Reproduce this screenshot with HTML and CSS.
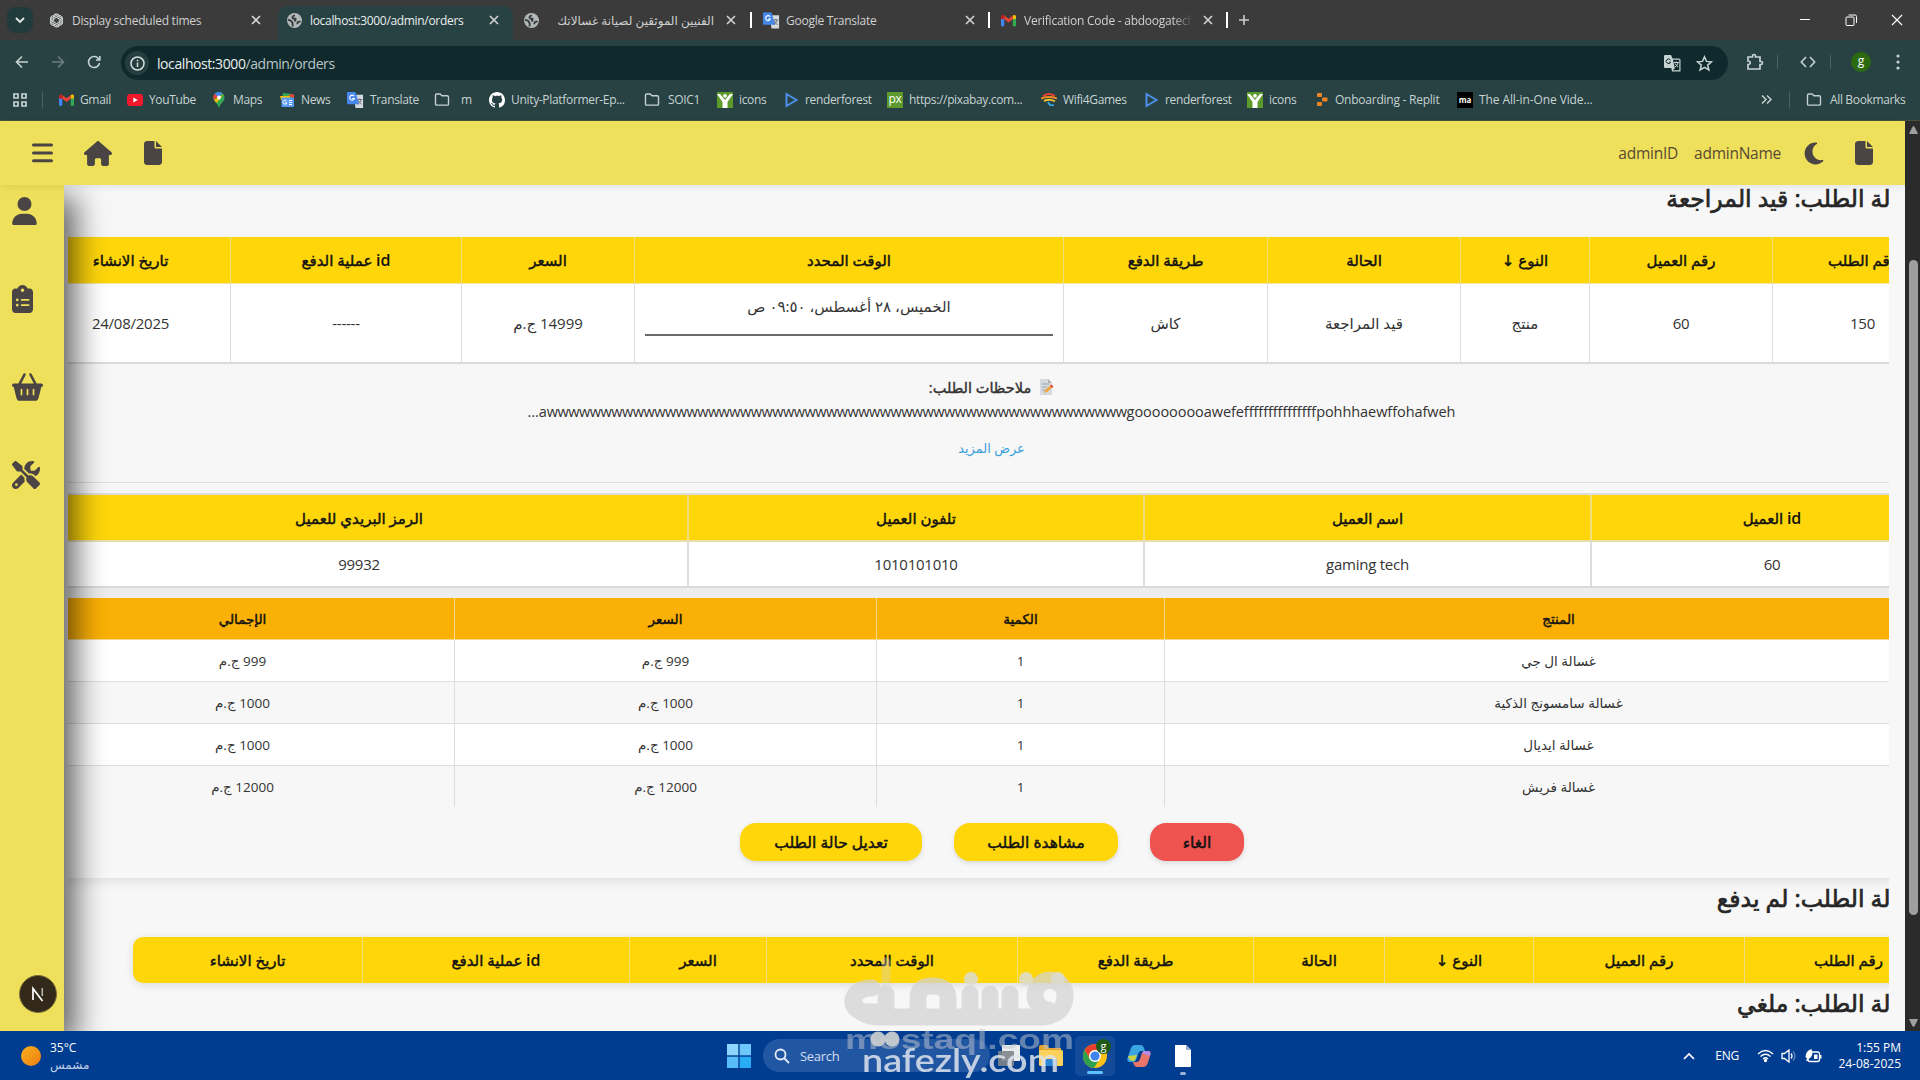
FILE: index.html
```html
<!DOCTYPE html>
<html lang="ar">
<head>
<meta charset="utf-8">
<title>localhost:3000/admin/orders</title>
<link rel="stylesheet" href="styles.css">
</head>
<body>
<svg class="defs" aria-hidden="true">
  <symbol id="x" viewBox="0 0 10 10"><path d="M1 1l8 8M9 1L1 9" stroke="currentColor" stroke-width="1.600" fill="none"/></symbol>
  <symbol id="globe" viewBox="0 0 16 16"><circle cx="8" cy="8" r="8" fill="#b5b8b9"/><path d="M8.500 2.500C6 3 5 4.500 6.500 6H9v2H7.500M1 7l3.500 1.500L6 11v3.500M14.500 9.500C12 8.500 11 10 11 12" stroke="#333d3e" stroke-width="2" fill="none"/></symbol>
  <symbol id="gtrans" viewBox="0 0 18 18"><path d="M7 4h10v14H9z" fill="#d5dadd"/><path d="M0 1h9l4 13H1a1 1 0 0 1-1-1z" fill="#4687ec"/><path d="M7.600 5.600A2.600 2.600 0 1 0 7.800 8H5.400" stroke="#fff" stroke-width="1.200" fill="none"/><path d="M11 9h5M13.500 8v1M15 9c-.5 2.500-2 4-3.500 5M12 10c.5 1.500 2 3 3.500 4" stroke="#667" fill="none"/></symbol>
  <symbol id="gmail" viewBox="0 0 16 12"><path d="M0 12V2l3.500 2.600V12z" fill="#4285f4"/><path d="M12.500 12V4.600L16 2v10z" fill="#34a853"/><path d="M12.500 4.600V.7c1.500-1.200 3.500-.6 3.500 1.300v2z" fill="#fbbc04"/><path d="M3.500.7 8 4.200 12.500.7v4L8 8.200l-4.500-3.500z" fill="#ea4335"/><path d="M0 2C0 .1 2-.5 3.500.7v4L0 4.500z" fill="#c5221f"/></symbol>
  <symbol id="folder" viewBox="0 0 16 14"><path d="M1 12V2.500Q1 1 2.500 1H6l2 2h5.500Q15 3 15 4.500V12q0 1-1 1H2q-1 0-1-1z" fill="none" stroke="#c3d1d1" stroke-width="1.500"/></symbol>
  <symbol id="ico-y" viewBox="0 0 16 16"><path d="M0 0h16v16H0z" fill="#5c9a2b"/><path d="M0 2l5.500 8v6h5v-6L16 2h-3l-5 6-5-6z" fill="#fff"/><circle cx="8" cy="3.800" r="1.900" fill="#fff"/></symbol>
  <symbol id="rf" viewBox="0 0 13 16"><path d="M1.500 2v12L11.500 8z" fill="none" stroke="#4a8fe6" stroke-width="2"/></symbol>
  <symbol id="file" viewBox="0 0 384 512"><path d="M0 64C0 28.700 28.700 0 64 0L224 0l0 128c0 17.700 14.300 32 32 32l128 0 0 288c0 35.300-28.700 64-64 64L64 512c-35.300 0-64-28.700-64-64L0 64zm384 64l-128 0L256 0 384 128z"/></symbol>
</svg>

<div class="tabs">
  <span class="tabmenu"><svg width="10" height="7" viewBox="0 0 10 7"><path d="M1 1l4 4 4-4" fill="none" stroke="#e6eded" stroke-width="1.800"/></svg></span>
  <div class="tab"><svg class="fav" viewBox="0 0 16 16" fill="none" stroke="#d0d3d4" stroke-width="1.200"><g id="k"><path d="M4.800 3.900a3.200 3.200 0 0 1 6.200-.6M5 8.900V4.300L9 2"/></g><use href="#k" transform="rotate(60 8 8)"/><use href="#k" transform="rotate(120 8 8)"/><use href="#k" transform="rotate(180 8 8)"/><use href="#k" transform="rotate(240 8 8)"/><use href="#k" transform="rotate(300 8 8)"/></svg><span class="tt">Display scheduled times</span><svg class="cl"><use href="#x"/></svg></div>
  <div class="tab on"><svg class="fav"><use href="#globe"/></svg><span class="tt">localhost:3000/admin/orders</span><svg class="cl"><use href="#x"/></svg></div>
  <div class="tab"><svg class="fav"><use href="#globe"/></svg><span class="tt ar" dir="rtl">الفنيين الموثقين لصيانة غسالاتك</span><svg class="cl"><use href="#x"/></svg></div>
  <div class="tab sep"><svg class="fav big"><use href="#gtrans"/></svg><span class="tt">Google Translate</span><svg class="cl"><use href="#x"/></svg></div>
  <div class="tab sep"><svg class="fav"><use href="#gmail"/></svg><span class="tt fade">Verification Code - abdoogatech</span><svg class="cl"><use href="#x"/></svg></div>
  <div class="newtab"><svg width="12" height="12" viewBox="0 0 12 12"><path d="M6 1v10M1 6h10" stroke="#ccc" stroke-width="1.600"/></svg></div>
  <div class="win">
    <svg width="12" height="12" viewBox="0 0 12 12"><path d="M1 5.500h10" stroke="#fff"/></svg>
    <svg width="12" height="12" viewBox="0 0 12 12" fill="none" stroke="#fff"><rect x="1" y="3" width="8" height="8.500" rx="1"/><path d="M3.500 1H10q1.500 0 1.500 1.500V9"/></svg>
    <svg width="12" height="12" viewBox="0 0 12 12"><path d="M1 1l10 10M11 1L1 11" stroke="#fff" stroke-width="1.200"/></svg>
  </div>
</div>

<div class="toolbar">
  <svg width="14" height="14" viewBox="0 0 14 14" fill="none" stroke="#c6d3d3" stroke-width="1.600"><path d="M13 7H2M7 1.500L1.500 7 7 12.500"/></svg>
  <svg width="14" height="14" viewBox="0 0 14 14" fill="none" stroke="#6b8080" stroke-width="1.600"><path d="M1 7h11M7 1.500L12.500 7 7 12.500"/></svg>
  <svg width="14" height="14" viewBox="0 0 14 14" fill="none" stroke="#c6d3d3" stroke-width="1.600"><path d="M12 4.500A5.500 5.500 0 1 0 12.500 8M12.800 1v4H9"/></svg>
  <div class="omni">
    <span class="info"><svg width="15" height="15" viewBox="0 0 15 15"><circle cx="7.500" cy="7.500" r="6.500" fill="none" stroke="#d5dfdf" stroke-width="1.500"/><path d="M7.500 6.500v4.500M7.500 3.800v1.500" stroke="#d5dfdf" stroke-width="1.500"/></svg></span>
    <span class="url">localhost:3000<b>/admin/orders</b></span>
    <svg width="17" height="17" viewBox="0 0 17 17"><path d="M1 0h6l1.500 3.500H15q1.500 0 1.500 1.500v11.500H8L7.300 13H1q-1 0-1-1V1q0-1 1-1z" fill="#c6d3d3"/><path d="M9 4.700h6.300v10.500H8.800l2-2z" fill="#10292c"/><path d="M6.500 5A2.300 2.300 0 1 0 6.700 7.200H5" stroke="#10292c" fill="none"/><path d="M9.800 7.500H15M12.300 6.500v1M14 7.500c-.5 2-1.500 3.500-3 4.500M11 8.500l3 3.500" stroke="#c6d3d3" fill="none"/></svg>
    <svg width="17" height="17" viewBox="0 0 17 17"><path d="M8.500 1.800l2 4.600 5 .4-3.800 3.300 1.200 4.900-4.400-2.700L4.100 15l1.200-4.900L1.500 6.800l5-.4z" fill="none" stroke="#c6d3d3" stroke-width="1.500"/></svg>
  </div>
  <svg class="ext" width="18" height="18" viewBox="0 0 18 18"><path d="M2 4h4.500V3a1.500 1.500 0 0 1 3 0v1H14v4.500h1a1.500 1.500 0 0 1 0 3h-1V16H2v-4.500h.5a1.500 1.500 0 0 0 0-3.500H2z" fill="none" stroke="#c6d3d3" stroke-width="1.700"/></svg>
  <i class="bar"></i>
  <svg class="code" width="16" height="12" viewBox="0 0 16 12" fill="none" stroke="#c6d3d3" stroke-width="1.600"><path d="M6 1L1.300 6 6 11M10 1l4.700 5L10 11"/></svg>
  <i class="bar"></i>
  <span class="avatar">g</span>
  <svg width="4" height="16" viewBox="0 0 4 16" fill="#c6d3d3"><circle cx="2" cy="2" r="1.600"/><circle cx="2" cy="8" r="1.600"/><circle cx="2" cy="14" r="1.600"/></svg>
</div>

<div class="marks">
  <div class="bm w1"><svg width="14" height="14" viewBox="0 0 14 14" fill="none" stroke="#c6d3d3" stroke-width="1.700"><path d="M1 1h4v4H1zM9 1h4v4H9zM1 9h4v4H1zM9 9h4v4H9z"/></svg></div>
  <div class="bm w2"><svg width="15" height="12"><use href="#gmail"/></svg>Gmail</div>
  <div class="bm w3"><svg width="16" height="12" viewBox="0 0 16 12"><rect width="16" height="12" rx="3" fill="#f0182c"/><path d="M6.300 3.500v5L10.800 6z" fill="#fff"/></svg>YouTube</div>
  <div class="bm w4"><svg width="12" height="16" viewBox="0 0 12 16"><path d="M6 0a5.500 5.500 0 0 1 5.500 5.700C11.500 9.500 7.500 11 6 16 4.500 11 .5 9.500.5 5.700A5.500 5.500 0 0 1 6 0z" fill="#34a853"/><path d="M6 0a5.500 5.500 0 0 0-4.500 2L5 5.500 9.500 1.300A6 6 0 0 0 6 0z" fill="#4285f4"/><path d="M1.500 2A5.500 5.500 0 0 0 1 8l4-3.500z" fill="#ea4335"/><path d="M1 8l2.500 3 7-8.500z" fill="#fbbc04"/><circle cx="6" cy="5.500" r="1.900" fill="#fff"/></svg>Maps</div>
  <div class="bm w5"><svg width="15" height="14" viewBox="0 0 15 14"><path d="M3 0l9 1v5H2z" fill="#34a853"/><path d="M8 2l6-1v5z" fill="#ea4335"/><path d="M0 3h10v4H1z" fill="#fbbc04"/><rect x="1.500" y="4.500" width="12.500" height="9.500" rx="1" fill="#5a9bf3"/><path d="M6.500 8A2 2 0 1 0 6.800 9.800H5M9 7.500h3M9 9.500h3M9 11.500h3" stroke="#fff" fill="none"/></svg>News</div>
  <div class="bm w6"><svg width="17" height="17"><use href="#gtrans"/></svg>Translate</div>
  <div class="bm w7"><svg width="16" height="13"><use href="#folder"/></svg>m</div>
  <div class="bm w8"><svg width="16" height="16" viewBox="0 0 16 16"><path fill="#fff" d="M8 0C3.580 0 0 3.580 0 8c0 3.540 2.290 6.530 5.470 7.590.4.070.55-.17.55-.38 0-.19-.01-.82-.01-1.490-2.010.37-2.530-.49-2.690-.94-.09-.23-.48-.94-.82-1.130-.28-.15-.68-.52-.01-.53.63-.01 1.080.58 1.230.82.720 1.210 1.870.87 2.330.66.070-.52.280-.87.510-1.070-1.780-.2-3.640-.89-3.640-3.950 0-.87.310-1.590.82-2.150-.08-.2-.36-1.020.08-2.120 0 0 .67-.21 2.200.82.640-.18 1.320-.27 2-.27s1.360.09 2 .27c1.530-1.040 2.200-.82 2.200-.82.440 1.100.160 1.920.080 2.120.510.56.820 1.270.820 2.150 0 3.070-1.870 3.750-3.650 3.950.290.250.540.730.540 1.480 0 1.070-.01 1.930-.01 2.200 0 .210.150.460.550.380A8 8 0 0 0 16 8c0-4.420-3.580-8-8-8z"/></svg>Unity-Platformer-Ep...</div>
  <div class="bm w9"><svg width="16" height="13"><use href="#folder"/></svg>SOIC1</div>
  <div class="bm w10"><svg width="16" height="16"><use href="#ico-y"/></svg>icons</div>
  <div class="bm w11"><svg width="13" height="16"><use href="#rf"/></svg>renderforest</div>
  <div class="bm w12"><span class="px">px</span>https://pixabay.com...</div>
  <div class="bm w13"><svg width="16" height="13" viewBox="0 0 16 13" fill="none" stroke-width="2"><path d="M2 3Q8-1 14 3" stroke="#e5402f"/><path d="M0 5.500q8-3 16 0" stroke="#f08a24"/><path d="M3 8q6-2.500 11 .5" stroke="#e8c12f"/><path d="M7 9l2 3 4 .5" stroke="#35a3dc"/></svg>Wifi4Games</div>
  <div class="bm w14"><svg width="13" height="16"><use href="#rf"/></svg>renderforest</div>
  <div class="bm w15"><svg width="16" height="16"><use href="#ico-y"/></svg>icons</div>
  <div class="bm w16"><svg width="12" height="13" viewBox="0 0 12 13" fill="#f08423"><rect x="1" width="5" height="4" rx="1"/><rect x="6" y="4.500" width="5.500" height="4" rx="1"/><rect x="1" y="9" width="5" height="4" rx="1"/></svg>Onboarding - Replit</div>
  <div class="bm w17"><span class="ma">ma</span>The All-in-One Vide...</div>
  <div class="bm w18"><svg width="11" height="9" viewBox="0 0 11 9" fill="none" stroke="#c6d3d3" stroke-width="1.500"><path d="M1 .5l4 4-4 4M6 .5l4 4-4 4"/></svg></div>
  <div class="bm w19"><svg width="16" height="13"><use href="#folder"/></svg>All Bookmarks</div>
</div>

<div class="page">
  <div class="view">
    <header class="top">
      <svg width="21" height="20" viewBox="0 0 21 20"><path d="M1.500 2h18M1.500 10h18M1.500 17.800h18" stroke="#4a4444" stroke-width="3" stroke-linecap="round"/></svg>
      <svg class="home" width="28" height="25" viewBox="0 0 576 512"><path d="M575.800 255.500c0 18-15 32.100-32 32.100l-32 0 .7 160.200c0 2.700-.2 5.400-.5 8.100l0 16.200c0 22.100-17.900 40-40 40l-16 0c-1.100 0-2.200 0-3.300-.1c-1.400 .1-2.800 .1-4.200 .1L416 512l-24 0c-22.100 0-40-17.900-40-40l0-24 0-64c0-17.700-14.300-32-32-32l-64 0c-17.700 0-32 14.300-32 32l0 64 0 24c0 22.100-17.900 40-40 40l-24 0-31.900 0c-1.500 0-3-.1-4.500-.2c-1.200 .1-2.400 .2-3.600 .2l-16 0c-22.100 0-40-17.900-40-40l0-112c0-.9 0-1.900 .1-2.800l0-69.700-32 0c-18 0-32-14-32-32.100c0-9 3-17 10-24L266.400 8c7-7 15-8 22-8s15 2 21 7L564.800 231.500c8 7 12 15 11 24z"/></svg>
      <svg class="f1" width="18" height="24"><use href="#file"/></svg>
      <span class="id">adminID</span>
      <span class="name">adminName</span>
      <svg class="moon" width="20" height="25" viewBox="0 0 384 512"><path d="M223.500 32C100 32 0 132.300 0 256S100 480 223.500 480c60.600 0 115.500-24.200 155.800-63.400c5-4.900 6.300-12.500 3.100-18.700s-10.100-9.700-17-8.500c-9.800 1.700-19.800 2.600-30.100 2.600c-96.900 0-175.500-78.800-175.500-176c0-65.800 36-123.100 89.300-153.300c6.100-3.500 9.200-10.500 7.700-17.300s-7.300-11.900-14.300-12.500c-6.300-.5-12.600-.8-19-.8z"/></svg>
      <svg width="18" height="24"><use href="#file"/></svg>
    </header>
    <div class="body">
      <nav class="side">
        <svg width="25" height="28" viewBox="0 0 448 512"><path d="M224 256A128 128 0 1 0 224 0a128 128 0 1 0 0 256zm-45.700 48C79.800 304 0 383.800 0 482.300C0 498.700 13.300 512 29.700 512l388.600 0c16.400 0 29.700-13.300 29.700-29.700C448 383.800 368.200 304 269.700 304l-91.400 0z"/></svg>
        <svg width="21" height="28" viewBox="0 0 384 512"><path d="M192 0c-41.800 0-77.400 26.700-90.500 64L64 64C28.700 64 0 92.700 0 128L0 448c0 35.300 28.700 64 64 64l256 0c35.300 0 64-28.700 64-64l0-320c0-35.300-28.700-64-64-64l-37.500 0C269.400 26.700 233.800 0 192 0zm0 64a32 32 0 1 1 0 64 32 32 0 1 1 0-64zM72 272a24 24 0 1 1 48 0 24 24 0 1 1 -48 0zm104-16l128 0c8.800 0 16 7.200 16 16s-7.200 16-16 16l-128 0c-8.800 0-16-7.200-16-16s7.200-16 16-16zM72 368a24 24 0 1 1 48 0 24 24 0 1 1 -48 0zm88 0c0-8.800 7.200-16 16-16l128 0c8.800 0 16 7.200 16 16s-7.200 16-16 16l-128 0c-8.800 0-16-7.200-16-16z"/></svg>
        <svg width="31" height="28" viewBox="0 0 576 512"><path d="M253.300 35.100c6.100-11.800 1.500-26.300-10.200-32.400s-26.300-1.500-32.400 10.200L117.600 192 32 192c-17.700 0-32 14.300-32 32s14.300 32 32 32L83.900 463.500C91 492 116.600 512 146 512L430 512c29.400 0 55-20 62.100-48.500L544 256c17.700 0 32-14.300 32-32s-14.300-32-32-32l-85.600 0L365.300 12.900C359.200 1.200 344.700-3.400 332.900 2.700s-16.300 20.600-10.200 32.400L404.300 192l-232.600 0L253.300 35.100zM192 304l0 96c0 8.800-7.200 16-16 16s-16-7.200-16-16l0-96c0-8.800 7.200-16 16-16s16 7.200 16 16zm96-16c8.800 0 16 7.200 16 16l0 96c0 8.800-7.200 16-16 16s-16-7.200-16-16l0-96c0-8.800 7.200-16 16-16zm128 16l0 96c0 8.800-7.200 16-16 16s-16-7.200-16-16l0-96c0-8.800 7.200-16 16-16s16 7.200 16 16z"/></svg>
        <svg width="28" height="28" viewBox="0 0 512 512"><path d="M78.600 5C69.100-2.400 55.600-1.500 47 7L7 47c-8.500 8.500-9.400 22-2.100 31.600l80 104c4.500 5.900 11.600 9.400 19 9.400l54.100 0 109 109c-14.700 29-10 65.400 14.300 89.600l112 112c12.500 12.500 32.800 12.500 45.300 0l64-64c12.500-12.500 12.500-32.800 0-45.300l-112-112c-24.200-24.200-60.600-29-89.600-14.300l-109-109 0-54.100c0-7.500-3.500-14.500-9.400-19L78.600 5zM19.900 396.100C7.200 408.800 0 426.100 0 444.100C0 481.600 30.400 512 67.900 512c18 0 35.300-7.200 48-19.900L233.700 374.300c-7.800-20.900-9-43.600-3.600-65.100l-61.700-61.700L19.900 396.100zM512 144c0-10.500-1.100-20.700-3.200-30.500c-2.400-11.200-16.100-14.100-24.200-6l-63.900 63.900c-3 3-7.100 4.700-11.300 4.700L352 176c-8.800 0-16-7.200-16-16l0-57.400c0-4.200 1.700-8.300 4.700-11.300l63.900-63.900c8.100-8.100 5.200-21.800-6-24.200C388.700 1.100 378.500 0 368 0C288.500 0 224 64.500 224 144l0 .8 85.300 85.300c36-9.100 75.800 .5 104 28.700L429 274.500c49-23 83-72.800 83-130.500zM56 432a24 24 0 1 1 48 0 24 24 0 1 1 -48 0z"/></svg>
        <span class="dev"><svg width="16" height="16" viewBox="0 0 16 16"><path d="M3 14V2.500L12.500 15" fill="none" stroke="#fff" stroke-width="1.700"/><path d="M12.300 2v8" stroke="#bbb" stroke-width="1.500"/></svg></span>
      </nav>
      <main class="main">
        <h2 class="h h1" dir="rtl"><span>حالة الطلب: قيد المراجعة</span></h2>
        <section class="order">
          <div class="g g1 head">
            <div>تاريخ الانشاء</div><div><p><b>id</b> عملية الدفع</p></div><div>السعر</div><div>الوقت المحدد</div><div>طريقة الدفع</div><div>الحالة</div><div>النوع ↓</div><div>رقم العميل</div><div>رقم الطلب</div>
          </div>
          <div class="g g1 row">
            <div>24/08/2025</div><div>------</div><div>14999 ج.م</div>
            <div class="time"><p>الخميس، ٢٨ أغسطس، ٠٩:٥٠ ص</p></div>
            <div>كاش</div><div>قيد المراجعة</div><div>منتج</div><div>60</div><div>150</div>
          </div>
          <div class="notes">
            <div class="nt" dir="rtl"><svg width="15" height="16" viewBox="0 0 15 16"><path d="M1 0h8l4 4v12H1z" fill="#d5dade"/><path d="M9 0v4h4z" fill="#aab2b8"/><path d="M3 5h7M3 8h5M3 11h3" stroke="#9aa4ac"/><path d="M5 14l1-3 6-5 2 2-6 5z" fill="#f2a33c"/><path d="M11 7l1.500-1.500 2 2L13 9z" fill="#e5484d"/></svg>ملاحظات الطلب:</div>
            <div class="ntext">...a<span class="w">wwwwwwwwwwwwwwwwwwwwwwwwwwwwwwwwwwwwwwwwwwwwwwwwwwwwww</span>gooooooooawefefffffffffffffffpohhhaewffohafweh</div>
            <div class="more">عرض المزيد</div>
          </div>
          <div class="g g2 head"><div>الرمز البريدي للعميل</div><div>تلفون العميل</div><div>اسم العميل</div><div><p><b>id</b> العميل</p></div></div>
          <div class="g g2 row"><div>99932</div><div>1010101010</div><div>gaming tech</div><div>60</div></div>
          <div class="g g3 head"><div>الإجمالي</div><div>السعر</div><div>الكمية</div><div>المنتج</div></div>
          <div class="g g3 row"><div>999 ج.م</div><div>999 ج.م</div><div>1</div><div>غسالة ال جي</div></div>
          <div class="g g3 row alt"><div>1000 ج.م</div><div>1000 ج.م</div><div>1</div><div>غسالة سامسونج الذكية</div></div>
          <div class="g g3 row"><div>1000 ج.م</div><div>1000 ج.م</div><div>1</div><div>غسالة ايديال</div></div>
          <div class="g g3 row alt last"><div>12000 ج.م</div><div>12000 ج.م</div><div>1</div><div>غسالة فريش</div></div>
          <div class="btns"><button class="b1">تعديل حالة الطلب</button><button class="b2">مشاهدة الطلب</button><button class="b3">الغاء</button></div>
        </section>
        <h2 class="h hh2" dir="rtl"><span>حالة الطلب: لم يدفع</span></h2>
        <div class="g g4 head">
          <div>تاريخ الانشاء</div><div><p><b>id</b> عملية الدفع</p></div><div>السعر</div><div>الوقت المحدد</div><div>طريقة الدفع</div><div>الحالة</div><div>النوع ↓</div><div>رقم العميل</div><div>رقم الطلب</div>
        </div>
        <h2 class="h hh3" dir="rtl"><span>حالة الطلب: ملغي</span></h2>
      </main>
    </div>
  </div>
  <div class="scroll"><svg width="9" height="8" viewBox="0 0 9 8"><path d="M4.500 0Q5.500 0 9 8H0Q3.500 0 4.500 0z" fill="#9f9f9f"/></svg><i></i><svg width="9" height="8" viewBox="0 0 9 8"><path d="M4.500 8Q5.500 8 9 0H0Q3.500 8 4.500 8z" fill="#9f9f9f"/></svg></div>
</div>

<div class="task">
  <div class="weather"><i></i><div><p>35°C</p><p class="sunny">مشمس</p></div></div>
  <svg class="start" width="24" height="24" viewBox="0 0 24 24"><path d="M0 0h11.300v11.300H0z" fill="#8fd6ff"/><path d="M12.700 0H24v11.300H12.700z" fill="#6ec8fb"/><path d="M0 12.700h11.300V24H0z" fill="#56bdf8"/><path d="M12.700 12.700H24V24H12.700z" fill="#27acf5"/></svg>
  <div class="search"><svg width="16" height="16" viewBox="0 0 16 16"><circle cx="6.500" cy="6.500" r="5" fill="none" stroke="#e5ecf8" stroke-width="1.800"/><path d="M10 10l5 5" stroke="#e5ecf8" stroke-width="1.800"/></svg>Search</div>
  <div class="apps">
    <svg width="24" height="24" viewBox="0 0 24 24"><rect x="5" y="1" width="18" height="16" fill="#e8ecee"/><rect x="1" y="7" width="16" height="15" rx="1" fill="#7d868c" opacity=".9"/></svg>
    <svg width="25" height="24" viewBox="0 0 25 24"><path d="M1 3q0-2 2-2h6l2 3h12v6H1z" fill="#e3a32b"/><rect x="1" y="6" width="24" height="16" rx="1.500" fill="#fbd15b"/><path d="M7 22v-6q0-1 1-1h10q1 0 1 1v6z" fill="#2f86d8"/></svg>
    <span class="chrome"><svg width="26" height="26" viewBox="0 0 26 26"><circle cx="13" cy="13" r="12" fill="#fbc116"/><path d="M2.600 7A12 12 0 0 1 23.400 7H13a6 6 0 0 0-5.200 9z" fill="#e8402f"/><path d="M2.600 7A12 12 0 0 0 12 25l5.500-9H7.800z" fill="#2ca24c"/><circle cx="13" cy="13" r="6" fill="#fff"/><circle cx="13" cy="13" r="4.600" fill="#3f83ee"/></svg><b>g</b></span>
    <svg width="24" height="22" viewBox="0 0 24 22"><path d="M8 0h6q2 0 3 3l1 3h-4q-2 0-3 3l-2 6q-1 2-3 2H3q-4 0-2-5l2.500-8Q5 0 8 0z" fill="#3aa5e0"/><path d="M1 11q1 5 6 5 2-2 3-6z" fill="#c9d445"/><path d="M16 22h-6q-2 0-3-2l-1-3h4q2 0 3-3l2-6q1-2 3-2h3q4 0 2 5l-2.500 8Q19 22 16 22z" fill="#e8746a"/><path d="M15 8q1-2 3-2h3q3 0 2 5z" fill="#b48be8"/></svg>
    <span class="doc"><svg width="18" height="22" viewBox="0 0 18 22"><path d="M1 0h11l5 5v16q0 1-1 1H1z" fill="#fff"/><path d="M12 0v5h5z" fill="#9bb0cc"/></svg></span>
  </div>
  <div class="tray">
    <svg width="12" height="8" viewBox="0 0 12 8"><path d="M1 7l5-5 5 5" fill="none" stroke="#fff" stroke-width="1.700"/></svg>
    <span class="eng">ENG</span>
    <svg width="17" height="14" viewBox="0 0 17 14" fill="none" stroke="#fff" stroke-width="1.300"><path d="M1 5q7.500-7 15 0M3.500 7.500q5-4.500 10 0M6 10q2.500-2.500 5 0"/><circle cx="8.500" cy="11.500" r="1" fill="#fff"/></svg>
    <svg width="17" height="14" viewBox="0 0 17 14" fill="none" stroke="#fff" stroke-width="1.300"><path d="M1 4.500h2.500L8 1v12L3.500 9.500H1zM10 4.500q2 2.500 0 5"/><path d="M12 2.500q4 4.500 0 9" opacity=".4"/></svg>
    <svg width="17" height="14" viewBox="0 0 17 14"><rect x="3" y="3" width="11.500" height="9.500" rx="2" fill="none" stroke="#fff" stroke-width="1.300"/><path d="M15 6h1.500v3.500H15zM9 5.500h3.500v4.500H9z" fill="#fff"/><path d="M.5 8Q.5 2 6.500 0q2.500 8-2.500 9.500L2.500 12H1l1-2.500z" fill="#fff"/></svg>
    <div class="clock"><p>1:55 PM</p><p>24-08-2025</p></div>
  </div>
</div>

<div class="wm">
  <svg width="240" height="130" viewBox="0 0 240 130">
    <g fill="none" stroke="#d2d2d2" stroke-width="17" stroke-linecap="round" stroke-linejoin="round" opacity=".72">
      <path d="M48 46V64H26Q14 62 15 52 18 40 34 40"/>
      <path d="M15 54Q22 69 42 69H205Q227 66 227 48A15 15 0 1 0 210 62M80 66V50Q80 38 94 38 110 38 110 50V66M132 46V66M152 46V66M172 46V66"/>
      <path d="M48 14V40" stroke-width="9" opacity=".5"/>
    </g>
    <g fill="#dcdcd4" opacity=".85"><circle cx="133" cy="31" r="7"/><circle cx="188" cy="31" r="7"/><circle cx="220" cy="31" r="7"/><circle cx="40" cy="91" r="7.500"/><circle cx="54" cy="91" r="7.500"/></g>
    <text x="7" y="101" textLength="229" lengthAdjust="spacingAndGlyphs" class="wm1">mostaql.com</text>
    <text x="24" y="124" textLength="197" lengthAdjust="spacingAndGlyphs" class="wm2">nafezly.com</text>
  </svg>
</div>
</body>
</html>
```
FILE: styles.css
```css
*{box-sizing:border-box}
body{margin:0;width:1920px;height:1080px;overflow:hidden;display:flex;flex-direction:column;position:relative;font-family:"Open Sans","Noto Sans","DejaVu Sans",sans-serif;color:#333;background:#f7f7f7}
p,h2{margin:0}
svg{flex:none;display:block}
.defs{position:absolute;width:0;height:0}

.tabs{height:40px;background:#3b3b3b;display:flex;align-items:center;color:#cfd0d0;font-size:12px;letter-spacing:-.25px;flex:none}
.tabmenu{width:26px;height:26px;margin-left:7px;border-radius:8px;background:#213b3c;display:flex;align-items:center;justify-content:center}
.tab{width:238px;height:40px;display:flex;align-items:center;padding-left:9px;position:relative}
.tabmenu + .tab{margin-left:7px}
.tab.on{background:#284142;height:34px;align-self:flex-end;border-radius:9px 9px 0 0;color:#e8eeee;width:235px;margin-right:3px;margin-top:6px;padding-bottom:6px}
.fav{width:15px;height:15px;margin-right:8px}
.tab.on + .tab{padding-left:8px}
.fav.big{width:17px;height:18px;margin-right:6px}
.tt{width:179px;white-space:nowrap;overflow:hidden}
.tab.on .tt{letter-spacing:-.32px}
.tt.ar{padding-right:12px;font-size:12px}
.fade{width:169px;margin-right:10px;-webkit-mask:linear-gradient(90deg,#000 88%,transparent)}
.cl{width:10px;height:10px;color:#d5d5d5}
.sep::before{content:"";position:absolute;left:-4px;top:12px;width:2px;height:16px;background:#fff}
.newtab{width:30px;height:16px;border-left:2px solid #fff;padding:2px 0 0 10px;margin-left:-4px}
.win{margin-left:auto;display:flex;gap:34px;padding-right:17px}

.toolbar{height:44px;background:#284142;flex:none;display:flex;align-items:center;padding-left:15px;gap:22px}
.toolbar > svg:nth-child(3){margin-right:-2px}
.omni{height:34px;width:1607px;margin-top:2px;border-radius:17px;background:#10292c;display:flex;align-items:center;padding:0 15px 0 4px;gap:15px}
.info{width:24px;height:24px;border-radius:12px;background:#263e40;display:flex;align-items:center;justify-content:center}
.url{flex:1;font-size:14px;letter-spacing:-.42px;color:#e8f0f0;margin-left:-7px}
.url b{font-weight:400;color:#b9c6c6}
.toolbar .ext{margin:0 -5px 0 -4px}
.toolbar .code{margin:0 -4px 0 4px}
.bar{width:1px;height:14px;background:#4a6263;margin:0 -4px}
.avatar{width:20px;height:20px;border-radius:10px;background:#2c6a12;color:#fff;font-size:12px;line-height:18px;text-align:center;margin:0 3px 0 2px}

.marks{height:37px;background:#284142;border-bottom:1px solid #46523c;display:flex;align-items:center;font-size:12px;letter-spacing:-.35px;color:#c6d3d3;flex:none;padding:0 0 5px 13px;white-space:nowrap}
.bm{display:flex;align-items:center;gap:6px;flex:none}
.w1{width:46px;height:16px}.w1 svg{margin-right:9px}
.w1::after{content:"";width:1px;height:16px;background:#4a6263}
.w2{width:68px}.w3{width:86px}.w4{width:67px;gap:8px}.w5{width:67px}.w6{width:87px}.w7{width:55px;gap:11px}.w8{width:155px;letter-spacing:-.32px}.w9{width:73px;gap:8px}.w10{width:68px}.w11{width:102px;gap:7px}.w12{width:154px}.w13{width:104px}.w14{width:102px;gap:7px}.w15{width:69px}.w16{width:141px;gap:7px;letter-spacing:-.24px}.w17{width:304px;letter-spacing:-.1px}.w18{width:45px;height:16px;gap:17px}.w19{gap:8px}
.w18::after{content:"";width:1px;height:16px;background:#4a6263}
.px,.ma{width:16px;height:16px;background:#5c9a2b;color:#fff;line-height:13px;text-align:center;font-size:12px}
.ma{background:#000;font-size:8px;font-weight:700;line-height:15px}

.page{height:910px;display:flex;flex:none}
.view{width:1905px;display:flex;flex-direction:column;position:relative}
.top{height:64px;background:#eee05a;display:flex;align-items:center;padding:0 32px 0 32px;flex:none;z-index:3;box-shadow:0 2px 8px rgba(0,0,0,.08);fill:#4a4444;font-size:15.500px;letter-spacing:-.25px;color:#5a4a33}
.home{margin:0 31px}
.f1{margin-left:1px}
.top .id{margin-left:auto;margin-right:16px}
.top .name{margin-right:23px}
.moon{margin-right:31px}
.body{height:846px;display:flex}
.side{width:64px;background:#eee05a;z-index:2;box-shadow:12px 12px 30px rgba(0,0,0,.6);fill:#4a4444;display:flex;flex-direction:column;gap:60px;padding:12px 0 18px 12px;clip-path:inset(0 -60px 0 0)}
.dev{margin:auto 0 0 7px;width:38px;height:38px;border-radius:19px;background:#33291a;border:1px solid #7a6c38;display:flex;align-items:center;justify-content:center}
.main{width:1821px;margin-left:4px;overflow:hidden;display:flex;flex-direction:column}
.h{font-size:23.500px;font-weight:400;-webkit-text-stroke:.7px #262626;color:#262626;white-space:nowrap;height:58px;line-height:27px;flex:none;margin-right:-23px}
.h1{height:52px}
.hh2{padding-top:6px;height:58px}
.hh3{padding-top:7px}
.order,.g4{margin-left:-37px;width:1921px;flex:none}
.order{height:642px;border-bottom:1px solid #e6e6e6;box-shadow:0 4px 10px rgba(0,0,0,.08)}
.g{display:grid;text-align:center;font-size:15px}
.g > div{display:flex;align-items:center;justify-content:center;direction:rtl;border-right:1px solid #ddd;white-space:nowrap;letter-spacing:-.25px}
.g > div:last-child{border-right:0}
.head{background:#ffd60a;color:#111;-webkit-text-stroke:.45px #111}
.head b{font-weight:600;font-size:16px;letter-spacing:0;-webkit-text-stroke:0}
.head > div{border-color:#f0df7a!important}
.row{background:#fff}
.g1{grid-template-columns:200px 231px 173px 429px 204px 193px 129px 183px 179px}
.g1.head{height:47px;border-bottom:1px solid #f0e6a0}
.g1.row{height:80px;border-bottom:2px solid #d9dbdb}
.g1 .time{flex-direction:column;justify-content:flex-start;padding:9px 10px 0}
.time p{width:100%;height:43px;line-height:26px;border-bottom:2px solid #6a6a6a}
.notes{height:119px;border-bottom:1px solid #dcdede;text-align:center}
.nt{display:flex;justify-content:center;align-items:center;gap:8px;font-size:14.500px;-webkit-text-stroke:.4px #333;height:28px;padding-top:18px;margin-bottom:9px}
.ntext{font-size:14.500px;letter-spacing:-.06px;line-height:22px;white-space:nowrap}
.ntext .w{letter-spacing:-.5px}
.more{font-size:13px;color:#3aa0dc;line-height:20px;margin-top:15px}
.g2{grid-template-columns:658px 456px 447px 360px}
.g2 > div{border-right-width:2px}
.g2.head{height:49px;margin-top:10px;border-top:2px solid #ddd;border-bottom:2px solid #e5dfae}
.g2.row{height:46px;border-bottom:2px solid #d9d9d9}
.g3{grid-template-columns:424px 422px 288px 787px;font-size:13.500px}
.g3.head{background:#fab005;height:52px;border-top:10px solid #ededed;border-bottom:1px solid #f5d98a}
.g3.head > div{border-color:#f5d98a!important}
.g3.row{height:42px;border-bottom:1px solid #ddd}
.g3.alt{background:#f7f7f7}
.g3.last{border-bottom:0;height:41px}
.btns{display:flex;gap:32px;padding:16px 0 0 709px}
button{height:38px;border:0;border-radius:16px;background:#ffd60a;font:400 15.500px "Open Sans","Noto Sans","DejaVu Sans",sans-serif;-webkit-text-stroke:.45px #111;color:#111;box-shadow:0 2px 5px rgba(0,0,0,.12);white-space:nowrap;padding:0}
.b1{width:182px}.b2{width:164px}.b3{width:94px;background:#ef5350}
.g4{margin-left:65px;width:1819px;grid-template-columns:230px 267px 137px 251px 236px 131px 149px 211px 207px;height:46px;border-radius:10px;box-shadow:0 2px 8px rgba(0,0,0,.12)}
.scroll{width:15px;background:#2b2b2b;display:flex;flex-direction:column;align-items:center;padding:5px 0 4px 1px}
.scroll i{width:9px;height:655px;margin:126px 0 auto;background:#9f9f9f;border-radius:5px}

.task{height:49px;background:#003c90;display:flex;align-items:center;color:#fff;font-size:12px;flex:none}
.weather{display:flex;gap:9px;width:727px;padding-left:21px;line-height:17px;align-items:center}
.weather i{width:20px;height:20px;border-radius:10px;background:linear-gradient(135deg,#f5b31c,#f07c14)}
.sunny{color:#c3d0e6}
.search{width:227px;height:33px;margin-left:12px;border-radius:17px;background:#2156a2;display:flex;align-items:center;gap:10px;padding-left:11px;font-size:13px;letter-spacing:-.3px;color:#d5dff0}
.apps{display:flex;align-items:center;margin-left:7px;gap:17px}
.chrome{width:40px;height:40px;margin:0 -5px 0 -5px;border-radius:5px;background:#144a9a;position:relative;display:flex;align-items:center;justify-content:center}
.chrome b{position:absolute;right:4px;top:3px;width:15px;height:15px;border-radius:8px;background:#1f5a14;font:11px/13px "Open Sans",sans-serif;text-align:center}
.chrome::after{content:"";position:absolute;left:12px;bottom:2px;width:16px;height:3px;border-radius:2px;background:#5cc0ff}
.doc{position:relative;margin-left:6px}
.doc::after{content:"";position:absolute;left:6px;bottom:-8px;width:6px;height:3px;border-radius:2px;background:#9db3d6}
.tray{margin-left:auto;display:flex;align-items:center;padding-right:19px}
.eng{margin:0 18px 0 20px;letter-spacing:-.2px}
.tray svg{margin-right:7px}
.tray svg:first-child{margin:0}
.clock{text-align:right;line-height:16px;width:72px;white-space:nowrap}

.wm{position:absolute;left:838px;top:948px;z-index:9}
.wm1{font:700 27px "Liberation Sans",sans-serif;fill:#c4c8d0;opacity:.5}
.wm2{font:600 32px Lato,sans-serif;fill:#dfe4ec;opacity:.85}
```
